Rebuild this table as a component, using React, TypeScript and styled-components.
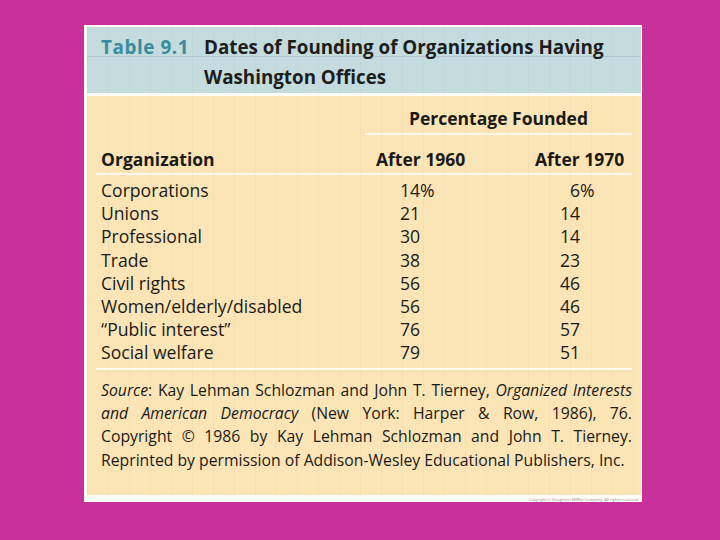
import React from "react";
import styled, {createGlobalStyle, css} from "styled-components";

const GlobalStyle = createGlobalStyle`
  html, body {
    margin: 0;
    padding: 0;
    background: #c8309a;
  }
  body {
    font-family: "Open Sans", "Noto Sans", "Liberation Sans", sans-serif;
    color: #1b1a17;
  }
`

const Page = styled.div`
  width: 720px;
  height: 540px;
  box-sizing: border-box;
  padding: 25px 0 0 84px;
  display: flex;
  align-items: flex-start;
`

const Card = styled.div`
  width: 558px;
  box-sizing: border-box;
  background: #fffdf6;
  padding: 2px 1px 0 3px;
  display: flex;
  flex-direction: column;
  gap: 3px;
`

const scanLines = css`
  background-image: repeating-linear-gradient(
    90deg,
    rgba(120, 110, 90, 0.05) 0px,
    rgba(120, 110, 90, 0.05) 1px,
    transparent 1px,
    transparent 21px
  );
`

const Header = styled.div`
  height: 66px;
  box-sizing: border-box;
  background-color: #c5dcdf;
  ${scanLines};
  padding: 6px 0 0 14px;
  display: grid;
  grid-template-columns: 103px 1fr;
  font-size: 18.8px;
  font-weight: 700;
  line-height: 29.5px;
  position: relative;

  &::after {
    content: "";
    position: absolute;
    left: 0;
    right: 0;
    top: 29px;
    height: 1px;
    background: rgba(130, 120, 150, 0.22);
  }
`

const TableNo = styled.div`
  color: #3a8b9c;
  letter-spacing: 0.6px;
`

const Title = styled.div`
  color: #1d1d1b;
`

const Body = styled.div`
  height: 399px;
  box-sizing: border-box;
  background-color: #fbe5b6;
  ${scanLines};
  padding: 11px 9px 0 9px;
  display: flex;
  flex-direction: column;
`

const Grid = styled.div`
  display: grid;
  grid-template-columns: 275px 159px 1fr;
`

const Spanner = styled.div`
  grid-column: 2 / 4;
  margin-left: -6px;
  padding-bottom: 3px;
  border-bottom: 2px solid #fffaf0;
  text-align: center;
  font-size: 17.5px;
  font-weight: 700;
  line-height: 23px;
  margin-bottom: 13px;
`

const HeadCell = styled.div`
  padding-left: 5px;
  font-size: 17.5px;
  font-weight: 700;
  line-height: 23px;
  padding-bottom: 2px;
  border-bottom: 2px solid #fffaf0;
  margin-bottom: 4px;
`

const Cell = styled.div<{ indent?: number }>`
  padding-left: ${p => 5 + (p.indent ?? 0)}px;
  font-size: 17.6px;
  line-height: 23.2px;
  white-space: nowrap;
`

const Rule = styled.div`
  height: 2px;
  background: #fffaf0;
  margin: 3px 0 9px;
`

const Source = styled.div`
  padding-left: 5px;
  font-size: 15.75px;
  line-height: 23.3px;
`

const SourceLine = styled.div<{ last?: boolean }>`
  white-space: nowrap;
  text-align: justify;
  text-align-last: ${p => p.last ? 'left' : 'justify'};
  em {
    font-style: italic;
  }
`

const Footer = styled.div`
  height: 4px;
  overflow: hidden;
  display: flex;
  justify-content: flex-end;
  padding-right: 2px;
  font-size: 4px;
  line-height: 4px;
  color: #8a8a8a;
`

const rows: [string, string, string][] = [
    ["Corporations", "14%", "\u20076%"],
    ["Unions", "21", "14"],
    ["Professional", "30", "14"],
    ["Trade", "38", "23"],
    ["Civil rights", "56", "46"],
    ["Women/elderly/disabled", "56", "46"],
    ["\u201CPublic interest\u201D", "76", "57"],
    ["Social welfare", "79", "51"],
];

function App() {
    return (
        <>
            <GlobalStyle/>
            <Page>
                <Card>
                    <Header>
                        <TableNo>Table 9.1</TableNo>
                        <Title>Dates of Founding of Organizations Having<br/>Washington Offices</Title>
                    </Header>
                    <Body>
                        <Grid>
                            <Spanner>Percentage Founded</Spanner>
                            <HeadCell>Organization</HeadCell>
                            <HeadCell>After 1960</HeadCell>
                            <HeadCell>After 1970</HeadCell>
                            {rows.map(([name, a, b]) => (
                                <React.Fragment key={name}>
                                    <Cell>{name}</Cell>
                                    <Cell indent={24}>{a}</Cell>
                                    <Cell indent={25}>{b}</Cell>
                                </React.Fragment>
                            ))}
                        </Grid>
                        <Rule/>
                        <Source>
                            <SourceLine><em>Source</em>: Kay Lehman Schlozman and John T. Tierney, <em>Organized Interests</em></SourceLine>
                            <SourceLine><em>and American Democracy</em> (New York: Harper &amp; Row, 1986), 76.</SourceLine>
                            <SourceLine>Copyright © 1986 by Kay Lehman Schlozman and John T. Tierney.</SourceLine>
                            <SourceLine last>Reprinted by permission of Addison-Wesley Educational Publishers, Inc.</SourceLine>
                        </Source>
                    </Body>
                    <Footer>Copyright © Houghton Mifflin Company. All rights reserved.</Footer>
                </Card>
            </Page>
        </>
    );
}

export default App;
